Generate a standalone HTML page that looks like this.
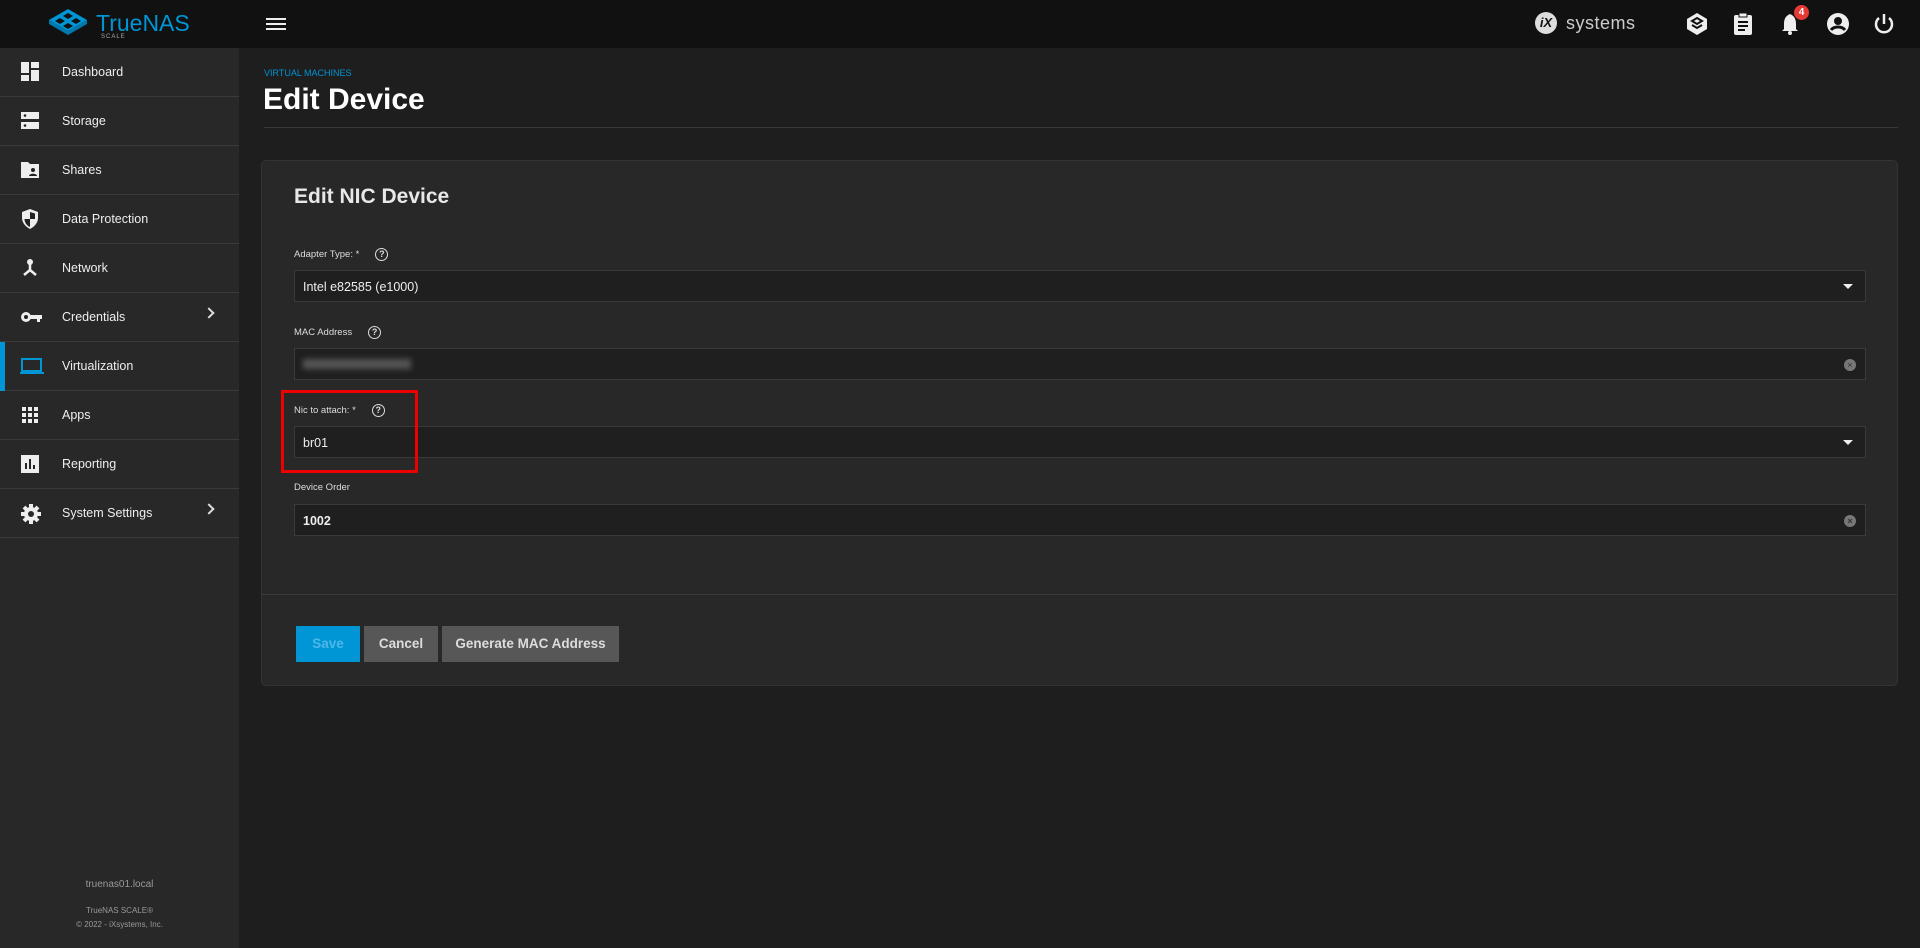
<!DOCTYPE html>
<html><head><meta charset="utf-8"><style>
*{box-sizing:border-box;margin:0;padding:0}
body{width:1920px;height:948px;background:#1e1e1e;font-family:"Liberation Sans",sans-serif;color:#e8e8e8;position:relative;overflow:hidden}
.top{position:absolute;left:0;top:0;width:1920px;height:48px;background:#111}
.side{position:absolute;left:0;top:48px;width:239px;height:900px;background:#282828}
.nav{position:absolute;left:0;width:239px;height:49px;border-bottom:1px solid #3a3a3a;font-size:12.5px;color:#eee}
.nav span{position:absolute;left:62px;top:17px}
.nav svg{position:absolute;left:20px;top:14px}
.chev{position:absolute;left:205px;top:16px;width:8px;height:8px;border-right:2px solid #ddd;border-top:2px solid #ddd;transform:rotate(45deg)}
.card{position:absolute;left:261px;top:160px;width:1637px;height:526px;background:#282828;border:1px solid #333;border-radius:5px}
.lbl{position:absolute;left:294px;font-size:9.5px;color:#ddd}
.q{display:inline-block;width:13px;height:13px;border:1.5px solid #ddd;border-radius:50%;font-size:9px;text-align:center;line-height:10px;font-weight:bold;vertical-align:middle;margin-left:16px}
.inp{position:absolute;left:294px;width:1572px;height:32px;background:#1f1f1f;border:1px solid #3a3a3a;font-size:12.5px;color:#eee;padding:9px 8px}
.arr{position:absolute;right:12px;top:13px;width:0;height:0;border-left:5px solid transparent;border-right:5px solid transparent;border-top:5px solid #eee}
.clr{position:absolute;right:9px;top:10px;width:12px;height:12px;border-radius:50%;background:#777;font-size:9px;color:#333;text-align:center;line-height:12px}
.btn{position:absolute;top:626px;height:36px;font-size:13.5px;font-weight:bold;text-align:center;line-height:36px}
</style></head><body>
<div class="top">
 <svg style="position:absolute;left:48px;top:8px" width="40" height="28" viewBox="0 0 40 28"><path d="M20 1 L39 12 L20 23 L1 12Z" fill="#0095d5"/><g fill="#111"><path d="M20 5 L25 8 L20 11 L15 8Z M12 10 L17 13 L12 16 L7 13Z M28 10 L33 13 L28 16 L23 13Z M20 15 L25 18 L20 21 L15 18Z"/></g><path d="M1 12 L1 16 L20 27 L39 16 L39 12 L20 23Z" fill="#0078ae"/></svg>
 <div style="position:absolute;left:96px;top:10px;font-size:23px;color:#0095d5">TrueNAS</div>
 <div style="position:absolute;left:101px;top:34px;font-size:6px;color:#aaa;letter-spacing:1px">SCALE</div>
 <div style="position:absolute;left:266px;top:18px;width:20px;height:2px;background:#eee;box-shadow:0 5px 0 #eee,0 10px 0 #eee"></div>
 <div style="position:absolute;left:1535px;top:12px;width:22px;height:22px;border-radius:50%;background:#ddd;color:#111;font-weight:bold;font-size:13px;text-align:center;line-height:22px;font-style:italic">iX</div>
 <div style="position:absolute;left:1566px;top:13px;font-size:18px;color:#ccc;letter-spacing:0.5px">systems</div>
 <svg style="position:absolute;left:1686px;top:12px" width="22" height="24" viewBox="0 0 22 24"><path d="M11 1 L21 7 L21 17 L11 23 L1 17 L1 7Z" fill="#eee"/><path d="M11 6 L16 9 L11 12 L6 9Z M6 13 L11 16 L16 13" stroke="#111" stroke-width="2" fill="none"/></svg>
 <svg style="position:absolute;left:1733px;top:12px" width="20" height="24" viewBox="0 0 20 24"><rect x="1" y="3" width="18" height="20" rx="2" fill="#eee"/><rect x="6" y="1" width="8" height="4" fill="#eee" stroke="#111"/><path d="M5 10h10M5 14h10M5 18h7" stroke="#111" stroke-width="2"/></svg>
 <svg style="position:absolute;left:1780px;top:13px" width="20" height="22" viewBox="0 0 20 22"><path d="M10 1 C5 3 4 7 4 11 L4 16 L2 18 L18 18 L16 16 L16 11 C16 7 15 3 10 1Z" fill="#eee"/><circle cx="10" cy="20" r="2" fill="#eee"/></svg>
 <div style="position:absolute;left:1794px;top:5px;width:15px;height:15px;border-radius:50%;background:#e53935;color:#fff;font-size:10px;font-weight:bold;text-align:center;line-height:15px">4</div>
 <svg style="position:absolute;left:1826px;top:12px" width="24" height="24" viewBox="0 0 24 24"><circle cx="12" cy="12" r="11" fill="#eee"/><circle cx="12" cy="9" r="4" fill="#111"/><path d="M5 18 C8 14 16 14 19 18" stroke="#111" stroke-width="3" fill="none"/></svg>
 <svg style="position:absolute;left:1873px;top:12px" width="22" height="24" viewBox="0 0 22 24"><path d="M11 2 V12" stroke="#eee" stroke-width="2.5"/><path d="M6 6 A8 8 0 1 0 16 6" stroke="#eee" stroke-width="2.5" fill="none"/></svg>
</div>
<div class="side">
 <div class="nav" style="top:0"><svg width="20" height="20"><rect x="1" y="0" width="8" height="11" fill="#eee"/><rect x="11" y="0" width="8" height="6" fill="#eee"/><rect x="11" y="8" width="8" height="11" fill="#eee"/><rect x="1" y="13" width="8" height="6" fill="#eee"/></svg><span>Dashboard</span></div>
 <div class="nav" style="top:49px"><svg width="20" height="20"><rect x="1" y="1" width="18" height="7" fill="#eee"/><rect x="1" y="11" width="18" height="7" fill="#eee"/><circle cx="5" cy="4.5" r="1.3" fill="#222"/><circle cx="5" cy="14.5" r="1.3" fill="#222"/></svg><span>Storage</span></div>
 <div class="nav" style="top:98px"><svg width="20" height="20"><path d="M1 2h7l2 2h9v14H1Z" fill="#eee"/><circle cx="13" cy="10" r="2" fill="#222"/><path d="M9 16c0-3 8-3 8 0Z" fill="#222"/></svg><span>Shares</span></div>
 <div class="nav" style="top:147px"><svg width="20" height="20"><path d="M10 0L18 3v6c0 5-4 9-8 11C6 18 2 14 2 9V3Z" fill="#eee"/><path d="M10 3v7H4.5c0 4 3 7 5.5 8V10h5V4.5Z" fill="#222"/></svg><span>Data Protection</span></div>
 <div class="nav" style="top:196px"><svg width="20" height="20"><circle cx="10" cy="4" r="3" fill="#eee"/><path d="M10 6v6L4 17M10 12l6 5" stroke="#eee" stroke-width="2.5" fill="none"/></svg><span>Network</span></div>
 <div class="nav" style="top:245px"><svg width="24" height="20"><circle cx="6" cy="10" r="5" fill="#eee"/><circle cx="6" cy="10" r="2" fill="#222"/><path d="M10 8h12v4h-2v3h-3v-3h-7Z" fill="#eee"/></svg><span>Credentials</span><i class="chev"></i></div>
 <div class="nav" style="top:294px"><div style="position:absolute;left:0;top:0;width:5px;height:49px;background:#0095d5"></div><svg width="24" height="20"><rect x="2" y="3" width="19" height="12" fill="none" stroke="#0095d5" stroke-width="2"/><rect x="0" y="16" width="24" height="2" fill="#0095d5"/></svg><span>Virtualization</span></div>
 <div class="nav" style="top:343px"><svg width="20" height="20" fill="#eee"><rect x="2" y="2" width="4" height="4"/><rect x="8" y="2" width="4" height="4"/><rect x="14" y="2" width="4" height="4"/><rect x="2" y="8" width="4" height="4"/><rect x="8" y="8" width="4" height="4"/><rect x="14" y="8" width="4" height="4"/><rect x="2" y="14" width="4" height="4"/><rect x="8" y="14" width="4" height="4"/><rect x="14" y="14" width="4" height="4"/></svg><span>Apps</span></div>
 <div class="nav" style="top:392px"><svg width="20" height="20"><rect x="1" y="1" width="18" height="18" fill="#eee"/><path d="M6 15V9M10 15V5M14 15V11" stroke="#222" stroke-width="2"/></svg><span>Reporting</span></div>
 <div class="nav" style="top:441px"><svg width="22" height="22" viewBox="0 0 22 22"><circle cx="11" cy="11" r="7" fill="#eee"/><g stroke="#eee" stroke-width="4"><path d="M11 1v20M1 11h20M4 4l14 14M18 4L4 18"/></g><circle cx="11" cy="11" r="3" fill="#282828"/></svg><span>System Settings</span><i class="chev"></i></div>
 <div style="position:absolute;left:0;width:239px;top:831px;text-align:center;font-size:10px;color:#999">truenas01.local</div>
 <div style="position:absolute;left:0;width:239px;top:858px;text-align:center;font-size:8px;color:#999">TrueNAS SCALE®</div>
 <div style="position:absolute;left:0;width:239px;top:872px;text-align:center;font-size:8px;color:#999">© 2022 - iXsystems, Inc.</div>
</div>
<div style="position:absolute;left:264px;top:68px;font-size:9px;color:#0095d5">VIRTUAL MACHINES</div>
<div style="position:absolute;left:263px;top:83px;font-size:30px;font-weight:bold;color:#fff">Edit Device</div>
<div style="position:absolute;left:264px;top:127px;width:1634px;height:1px;background:#3a3a3a"></div>
<div class="card"></div>
<div style="position:absolute;left:294px;top:185px;font-size:21px;font-weight:bold;color:#e8e8e8">Edit NIC Device</div>
<div class="lbl" style="top:248px">Adapter Type: *<span class="q">?</span></div>
<div class="inp" style="top:270px">Intel e82585 (e1000)<div class="arr"></div></div>
<div class="lbl" style="top:326px">MAC Address<span class="q">?</span></div>
<div class="inp" style="top:348px"><span style="display:inline-block;width:108px;height:10px;background:#555;filter:blur(3px)"></span><div class="clr">×</div></div>
<div class="lbl" style="top:404px">Nic to attach: *<span class="q">?</span></div>
<div class="inp" style="top:426px">br01<div class="arr"></div></div>
<div class="lbl" style="top:482px">Device Order</div>
<div class="inp" style="top:504px;font-weight:bold">1002<div class="clr">×</div></div>
<div style="position:absolute;left:281px;top:390px;width:137px;height:83px;border:3px solid #e00"></div>
<div style="position:absolute;left:262px;top:594px;width:1635px;height:1px;background:#3a3a3a"></div>
<div class="btn" style="left:296px;width:64px;background:#0095d5;color:#4db8e8">Save</div>
<div class="btn" style="left:364px;width:74px;background:#575757;color:#ddd">Cancel</div>
<div class="btn" style="left:442px;width:177px;background:#575757;color:#ddd">Generate MAC Address</div>
</body></html>
